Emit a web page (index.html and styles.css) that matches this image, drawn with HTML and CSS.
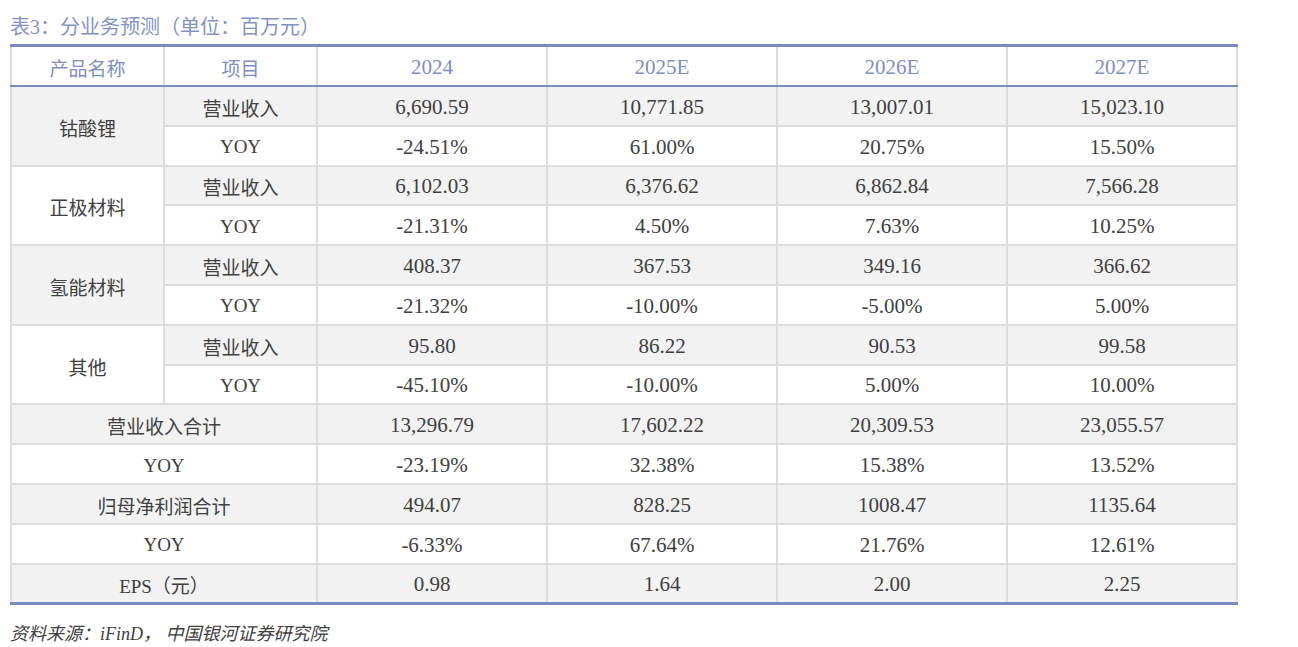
FILE: index.html
```html
<!DOCTYPE html>
<html lang="zh-CN">
<head>
<meta charset="utf-8">
<link rel="stylesheet" href="styles.css">
</head>
<body>
<div class="page">
  <div class="title">表3：分业务预测（单位：百万元）</div>
  <table class="fc">
    <colgroup>
      <col class="c1"><col class="c2"><col class="cn"><col class="cn"><col class="cn"><col class="cn">
    </colgroup>
    <thead>
      <tr><th>产品名称</th><th>项目</th><th class="n">2024</th><th class="n">2025E</th><th class="n">2026E</th><th class="n">2027E</th></tr>
    </thead>
    <tbody>
      <tr class="g"><td rowspan="2" class="grp g">钴酸锂</td><td>营业收入</td><td class="n">6,690.59</td><td class="n">10,771.85</td><td class="n">13,007.01</td><td class="n">15,023.10</td></tr>
      <tr class="w"><td>YOY</td><td class="n">-24.51%</td><td class="n">61.00%</td><td class="n">20.75%</td><td class="n">15.50%</td></tr>
      <tr class="g"><td rowspan="2" class="grp w">正极材料</td><td>营业收入</td><td class="n">6,102.03</td><td class="n">6,376.62</td><td class="n">6,862.84</td><td class="n">7,566.28</td></tr>
      <tr class="w"><td>YOY</td><td class="n">-21.31%</td><td class="n">4.50%</td><td class="n">7.63%</td><td class="n">10.25%</td></tr>
      <tr class="g"><td rowspan="2" class="grp g">氢能材料</td><td>营业收入</td><td class="n">408.37</td><td class="n">367.53</td><td class="n">349.16</td><td class="n">366.62</td></tr>
      <tr class="w"><td>YOY</td><td class="n">-21.32%</td><td class="n">-10.00%</td><td class="n">-5.00%</td><td class="n">5.00%</td></tr>
      <tr class="g"><td rowspan="2" class="grp w">其他</td><td>营业收入</td><td class="n">95.80</td><td class="n">86.22</td><td class="n">90.53</td><td class="n">99.58</td></tr>
      <tr class="w"><td>YOY</td><td class="n">-45.10%</td><td class="n">-10.00%</td><td class="n">5.00%</td><td class="n">10.00%</td></tr>
      <tr class="g"><td colspan="2">营业收入合计</td><td class="n">13,296.79</td><td class="n">17,602.22</td><td class="n">20,309.53</td><td class="n">23,055.57</td></tr>
      <tr class="w"><td colspan="2">YOY</td><td class="n">-23.19%</td><td class="n">32.38%</td><td class="n">15.38%</td><td class="n">13.52%</td></tr>
      <tr class="g"><td colspan="2">归母净利润合计</td><td class="n">494.07</td><td class="n">828.25</td><td class="n">1008.47</td><td class="n">1135.64</td></tr>
      <tr class="w"><td colspan="2">YOY</td><td class="n">-6.33%</td><td class="n">67.64%</td><td class="n">21.76%</td><td class="n">12.61%</td></tr>
      <tr class="g last"><td colspan="2">EPS（元）</td><td class="n">0.98</td><td class="n">1.64</td><td class="n">2.00</td><td class="n">2.25</td></tr>
    </tbody>
  </table>
  <div class="source">资料来源：iFinD， 中国银河证券研究院</div>
</div>
</body>
</html>
```

FILE: styles.css
```css
html, body {
  margin: 0;
  padding: 0;
  background: #ffffff;
}
.page {
  padding: 13px 0 0 10px;
  font-family: "Liberation Serif", "Noto Sans CJK SC", serif;
  color: #404040;
}
.title {
  font-size: 20px;
  line-height: 28px;
  color: #8393c5;
  height: 31px;
}
.fc {
  border-collapse: collapse;
  width: 1227px;
  table-layout: fixed;
  font-size: 19px;
}
.c1, .c2 { width: 153px; }
.cn { width: 230px; }
.fc th, .fc td {
  border: 2px solid #dcdcdc;
  text-align: center;
  padding: 3px 0 0 0;
  font-weight: normal;
  height: 34.8px;
}
.fc .n {
  font-size: 21px;
}
.fc thead th {
  color: #7d8ec5;
  border-top: 3px solid #7b8cc2;
  border-bottom: 2px solid #7b8cc2;
  padding-top: 2px;
  height: 36px;
  background: #ffffff;
}
.fc tr.g td { background: #f2f2f2; }
.fc tr.w td { background: #ffffff; }
.fc td.grp.g { background: #f2f2f2; }
.fc td.grp.w { background: #ffffff; }
.fc tr.last td { border-bottom: 3px solid #7b8cc2; }
.source {
  margin-top: 14px;
  font-size: 18px;
  font-style: italic;
  color: #404040;
}
```
